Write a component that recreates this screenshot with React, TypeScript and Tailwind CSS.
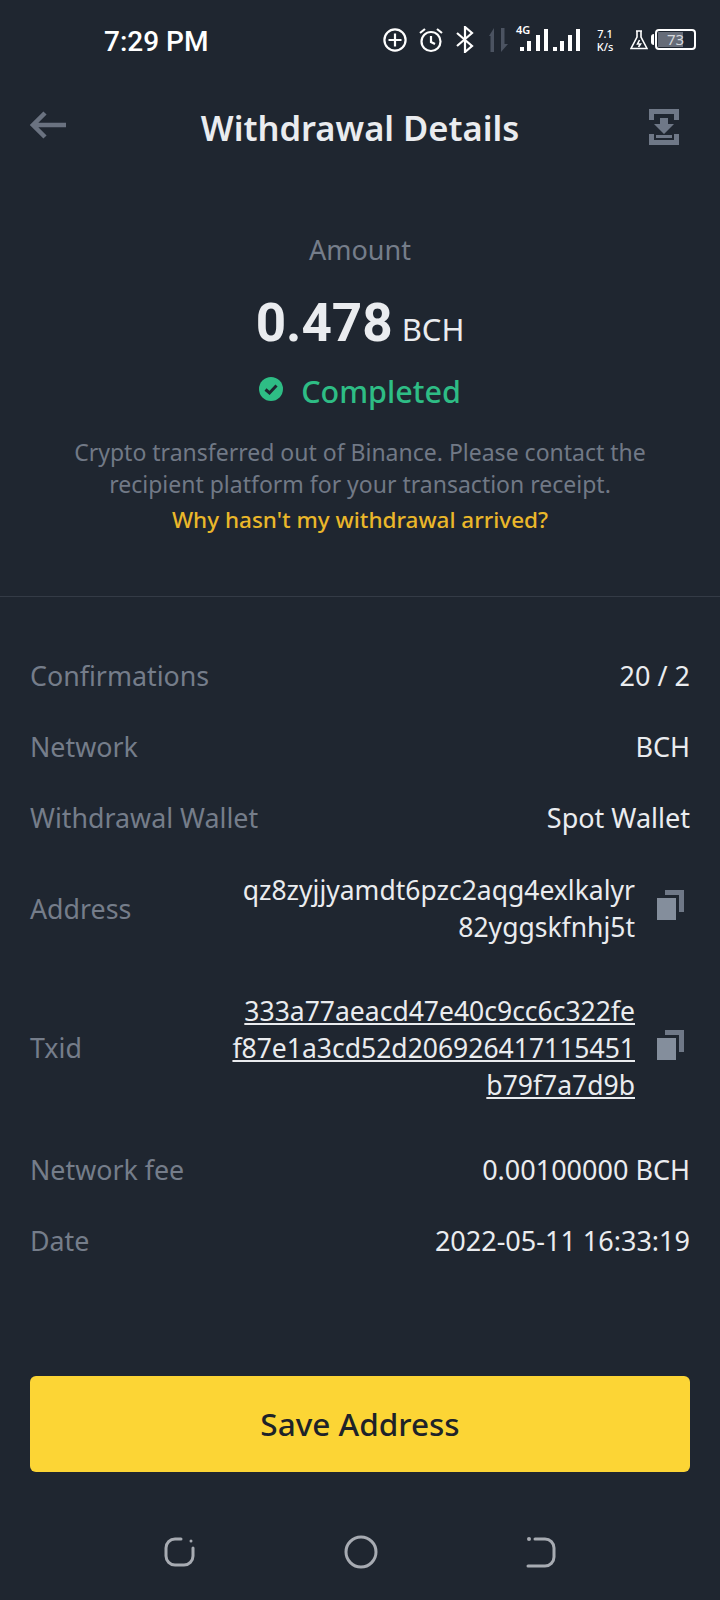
import React from 'react';

const font = { fontFamily: '"Noto Sans", sans-serif' };

const Row = ({ label, value }: { label: string; value: string }) => (
  <div className="flex items-center justify-between h-[71px]">
    <span className="text-[26.800px] text-[#757d8a]">{label}</span>
    <span className="text-[27px] text-[#eaecef]">{value}</span>
  </div>
);

const CopyIcon = () => (
  <svg width="27" height="30" viewBox="0 0 27 30" className="shrink-0 mb-[8px]">
    <path d="M8 0h19v22h-5V5H8z" fill="#6f7887" />
    <rect x="0" y="8" width="19" height="22" fill="#848e9c" />
  </svg>
);

const StatusIcons = () => (
  <div className="flex items-center text-white">
    <svg width="24" height="24" viewBox="0 0 24 24" fill="none" stroke="white" strokeWidth="2.2">
      <circle cx="12" cy="12" r="10.6" />
      <path d="M5.500 12h13M12 5.500v13" />
    </svg>
    <svg width="26" height="26" viewBox="0 0 26 26" fill="none" stroke="white" strokeWidth="2.2" className="ml-[11px]">
      <circle cx="13" cy="14.5" r="9.5" />
      <path d="M13 9v6l4 2M2 6l5-4M24 6l-5-4" />
    </svg>
    <svg width="20" height="27" viewBox="0 0 20 27" fill="none" stroke="white" strokeWidth="2.2" className="ml-[11px]">
      <path d="M2 7l15 13-7 6V1l7 6L2 20" />
    </svg>
    <svg width="19" height="24" viewBox="0 0 19 24" fill="#4b5361" className="ml-[14px]">
      <path d="M5 0v24H1.500V8H0zM12 0h3.500v16H19l-7 8z" />
    </svg>
    <div className="relative ml-[8px] w-[65px] h-[25px]">
      <span className="absolute left-0 top-[-3px] text-[11px] font-semibold leading-none">4G</span>
      <svg width="65" height="25" viewBox="0 0 65 25" fill="white" className="absolute left-0 top-0">
        <rect x="4" y="20" width="4" height="4" />
        <rect x="11" y="14" width="4" height="10" />
        <rect x="20" y="8" width="4" height="16" />
        <rect x="28" y="2" width="4" height="22" />
        <rect x="37" y="20" width="4" height="4" />
        <rect x="44" y="14" width="4" height="10" />
        <rect x="52" y="8" width="4" height="16" />
        <rect x="60" y="2" width="4" height="22" />
      </svg>
    </div>
    <div className="ml-[14px] w-[20px] flex flex-col items-center text-[11px] leading-[13px] font-medium">
      <span>7.1</span>
      <span>K/s</span>
    </div>
    <svg width="18" height="20" viewBox="0 0 18 20" fill="none" stroke="white" strokeWidth="1.6" className="ml-[15px]">
      <path d="M6 1h6M7 1v6L1 18.500h16L11 7V1" />
      <path d="M9.500 10l-2 4h3l-2 3" />
    </svg>
    <div className="ml-[3px] w-[3px] h-[11px] bg-white rounded-l-sm" />
    <div className="ml-[1px] w-[41px] h-[21px] border-2 border-white rounded-[4px] p-[1px] relative">
      <div className="h-full w-[71%] bg-[#666c78]" />
      <span className="absolute inset-0 flex items-center justify-center text-[15px] leading-none text-[#d5d8dc]">73</span>
    </div>
  </div>
);

export default function App() {
  return (
    <div className="w-[720px] h-[1600px] bg-[#1f2630] flex flex-col overflow-hidden" style={font}>
      {/* status bar */}
      <div className="h-[82px] pl-[104px] pr-[24px] pt-[27px] flex items-start justify-between">
        <span className="text-[28px] leading-[30px] font-medium text-white" style={{ fontFamily: 'Roboto, sans-serif' }}>7:29 PM</span>
        <div className="-mt-[1px]"><StatusIcons /></div>
      </div>

      {/* header */}
      <div className="h-[90px] px-[30px] flex items-center justify-between">
        <svg width="36" height="28" viewBox="0 0 36 28" fill="none" stroke="#6a7280" strokeWidth="4.500" className="-mt-[4px]">
          <path d="M36 14H4M15 2L3 14l12 12" />
        </svg>
        <h1 className="text-[34.500px] mt-[2px] ml-[5px] font-semibold text-[#eaecef]">Withdrawal Details</h1>
        <svg width="30" height="36" viewBox="0 0 30 36" fill="#6f7887" className="mr-[11px]">
          <path d="M0 0h30v11h-5V5H5v6H0zM0 25h5v6h20v-6h5v11H0z" />
          <path d="M11 9h8v6h6L15 25 5 15h6zM7 26h16v3H7z" />
        </svg>
      </div>

      {/* amount */}
      <div className="h-[425px] pt-[60px] flex flex-col items-center border-b border-[#343b46]">
        <span className="text-[27px] leading-[36px] text-[#757d8a]">Amount</span>
        <div className="mt-[25px] flex items-baseline h-[60px]">
          <span className="text-[53px] leading-[60px] font-bold text-[#eaecef]" style={{ fontFamily: 'Roboto, sans-serif' }}>0.478</span>
          <span className="ml-[9px] text-[31px] text-[#eaecef]">BCH</span>
        </div>
        <div className="mt-[17px] flex items-center h-[44px]">
          <svg width="24" height="24" viewBox="0 0 24 24" className="mb-[6px]">
            <circle cx="12" cy="12" r="12" fill="#2ebd85" />
            <path d="M6.500 12.500l4 3.500 7-7.500" fill="none" stroke="#1f2630" strokeWidth="3" />
          </svg>
          <span className="ml-[18px] text-[30.500px] font-medium text-[#2ebd85]">Completed</span>
        </div>
        <p className="mt-[22px] text-[23px] leading-[32px] text-center text-[#717986]">
          Crypto transferred out of Binance. Please contact the<br />recipient platform for your transaction receipt.
        </p>
        <span className="mt-[4px] text-[22.500px] leading-[32px] font-medium text-[#eab72a]">Why hasn't my withdrawal arrived?</span>
      </div>

      {/* details */}
      <div className="px-[30px] pt-[44px] flex flex-col">
        <Row label="Confirmations" value="20 / 2" />
        <Row label="Network" value="BCH" />
        <Row label="Withdrawal Wallet" value="Spot Wallet" />

        <div className="flex items-center justify-between mt-[18px] h-[74px]">
          <span className="text-[26.800px] text-[#757d8a]">Address</span>
          <div className="flex items-center">
            <span className="text-[26.500px] leading-[37px] text-right text-[#eaecef]">
              qz8zyjjyamdt6pzc2aqg4exlkalyr<br />82yggskfnhj5t
            </span>
            <div className="ml-[22px] mr-[6px] flex"><CopyIcon /></div>
          </div>
        </div>

        <div className="flex items-center justify-between mt-[47px] h-[111px]">
          <span className="text-[26.800px] text-[#757d8a]">Txid</span>
          <div className="flex items-center">
            <span className="text-[26.500px] leading-[37px] text-right underline underline-offset-2 text-[#eaecef]">
              333a77aeacd47e40c9cc6c322fe<br />f87e1a3cd52d206926417115451<br />b79f7a7d9b
            </span>
            <div className="ml-[22px] mr-[6px] flex"><CopyIcon /></div>
          </div>
        </div>

        <div className="mt-[31px]">
          <Row label="Network fee" value="0.00100000 BCH" />
          <Row label="Date" value="2022-05-11 16:33:19" />
        </div>
      </div>

      {/* button */}
      <div className="mt-[99px] px-[30px]">
        <button className="w-full h-[96px] rounded-[6px] bg-[#fcd535] text-[31.500px] font-medium text-[#1e2329]">Save Address</button>
      </div>

      {/* nav bar */}
      <div className="mt-[63px] pl-[164px] pr-[164px] flex items-center justify-between">
        <svg width="32" height="32" viewBox="0 0 32 32" fill="none" stroke="#a7abb2" strokeWidth="3" strokeLinecap="round">
          <path d="M17 3h-6a9 9 0 0 0-9 9v8a9 9 0 0 0 9 9h9a9 9 0 0 0 9-9v-8" />
          <circle cx="27" cy="5" r="1.500" fill="#a7abb2" stroke="none" />
        </svg>
        <svg width="34" height="34" viewBox="0 0 34 34" fill="none" stroke="#a7abb2" strokeWidth="3">
          <circle cx="17" cy="17" r="15" />
        </svg>
        <svg width="30" height="32" viewBox="0 0 30 32" fill="none" stroke="#a7abb2" strokeWidth="3" strokeLinecap="round">
          <path d="M9 3h10a9 9 0 0 1 9 9v9a9 9 0 0 1-9 9H2" />
          <circle cx="3" cy="3" r="2" fill="#a7abb2" stroke="none" />
        </svg>
      </div>
    </div>
  );
}
